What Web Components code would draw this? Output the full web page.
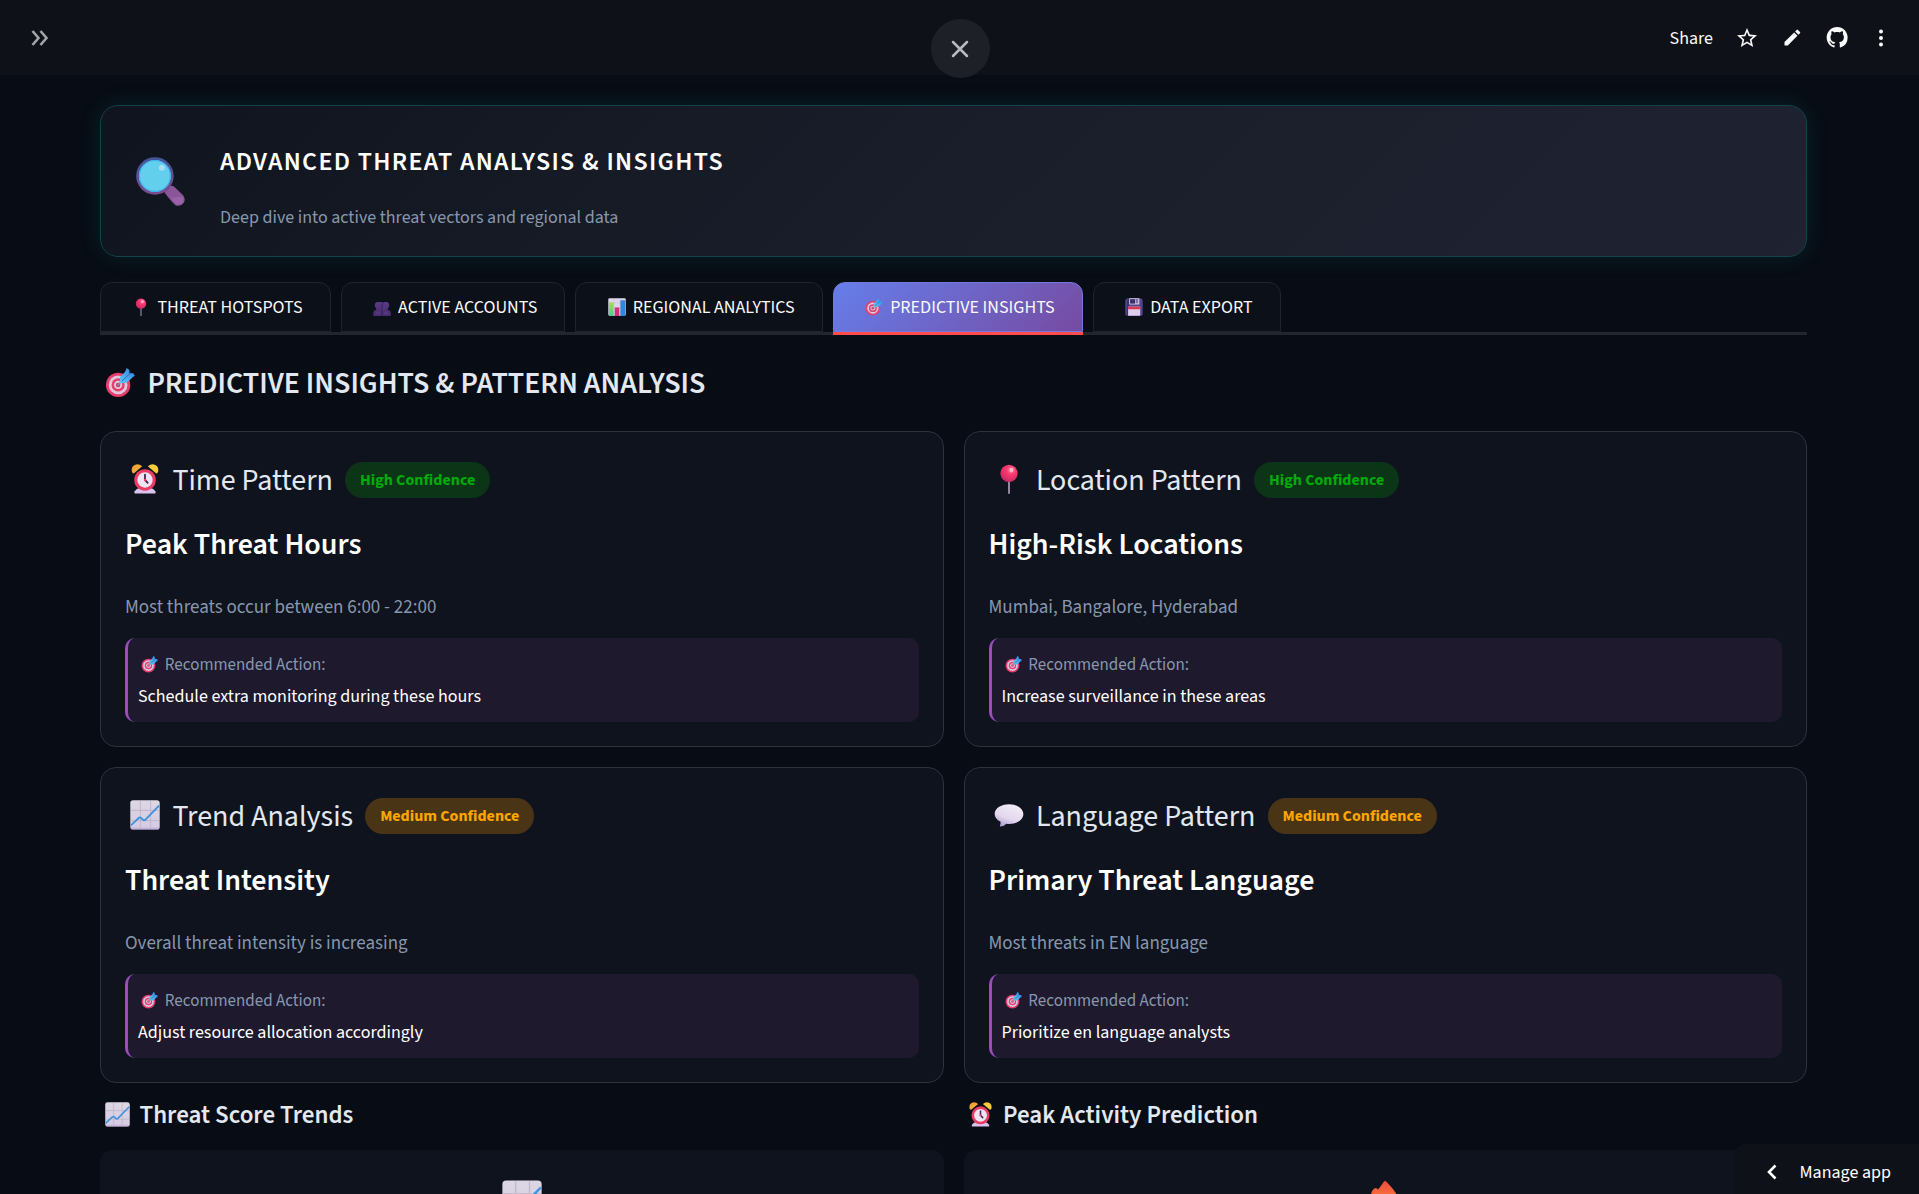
<!DOCTYPE html>
<html lang="en">
<head>
<meta charset="utf-8">
<meta name="viewport" content="width=device-width, initial-scale=1">
<title>Advanced Threat Analysis &amp; Insights</title>
<style>
  :root {
    --page: #080c14;
    --bar: #0e1117;
    --card: #0f131d;
    --text: #e2e8f0;
    --muted: #8797ae;
    --line: #2f323d;
  }
  html, body { height: 100%; margin: 0; }
  body {
    background: var(--page);
    color: var(--text);
    font-family: "Source Sans 3", "Source Sans Pro", "Noto Sans CJK SC", sans-serif;
    font-size: 18px;
  }
</style>
</head>
<body>
<threat-app></threat-app>

<script>
const define = (name, markup, setup) => {
  const template = document.createElement('template');
  template.innerHTML = markup;
  customElements.define(name, class extends HTMLElement {
    connectedCallback() {
      if (this.shadowRoot) return;
      const root = this.attachShadow({ mode: 'open' });
      root.append(template.content.cloneNode(true));
      if (setup) setup(this, root);
    }
  });
};

const GLYPHS = {
  target: `<defs><linearGradient id="d" x1="0" y1="1" x2="1" y2="0"><stop offset="0" stop-color="#5cc8f5"/><stop offset="1" stop-color="#2f7fe0"/></linearGradient></defs>
    <circle cx="14" cy="18" r="13" fill="#e83e6b"/><circle cx="14" cy="18" r="10" fill="#dccbe0"/><circle cx="14" cy="18" r="7" fill="#e83e6b"/><circle cx="14" cy="18" r="4.400" fill="#dccbe0"/><circle cx="14" cy="18" r="2.400" fill="#c93a68"/>
    <path d="M14 18 19 13" stroke="#8d8aa8" stroke-width="1.800" stroke-linecap="round"/><path d="M16 16V9.500L21.500 4 23 0l3 2V5.500h4L31.800 8 29 10.500 23 16z" fill="url(#d)"/><path d="m18 14 9-8.500" stroke="#2567c4" stroke-width="1"/>`,
  pin: `<defs><radialGradient id="p" cx=".62" cy=".3" r=".7"><stop offset="0" stop-color="#ff7f9d"/><stop offset=".4" stop-color="#f9396f"/><stop offset="1" stop-color="#c92a62"/></radialGradient></defs>
    <path d="M16 17v14" stroke="#9c8fa8" stroke-width="2" stroke-linecap="round"/><circle cx="16" cy="10" r="9.200" fill="url(#p)"/><ellipse cx="18.600" cy="6.500" rx="2.200" ry="2.500" fill="#ffb6c8"/>`,
  people: `<defs><linearGradient id="u" x1="0" y1="0" x2="0" y2="1"><stop offset="0" stop-color="#5b3a85"/><stop offset="1" stop-color="#472d6e"/></linearGradient></defs>
    <g fill="url(#u)"><path d="M8.500 7C4.500 7 3 9.500 3.200 13c.2 3 1.300 5 2.800 6v2c-3 .8-5.500 2-5.500 5v6h15.800V7.200z"/><path d="M23.500 7c4 0 5.500 2.500 5.300 6-.2 3-1.300 5-2.800 6v2c3 .8 5.500 2 5.500 5v6H16V9c2-1.600 4-2 7.500-2z"/></g>
    <path d="M15.500 9.500c1.600 4 1 8-1.500 10M16 21v10" fill="none" stroke="#2b1c48" stroke-width="1.400"/><path d="M5 27h8M19 27h8" stroke="#6b4994" stroke-width="1.400"/>`,
  bars: `<defs><linearGradient id="g" x1="0" y1="0" x2="0" y2="1"><stop offset="0" stop-color="#a5dc4c"/><stop offset="1" stop-color="#45ce9a"/></linearGradient></defs>
    <rect x=".5" y=".5" width="31" height="31" rx="2" fill="#e0d6ea"/><path d="M1 9h30M1 17h30M1 25h30M11 1v30M21 1v30" stroke="#c8bbd4" stroke-width="1"/>
    <rect x="2" y="8" width="8" height="24" rx="1" fill="url(#g)"/><rect x="12" y="17" width="8" height="15" rx="1" fill="#d92b78"/><rect x="22" y="4" width="8.500" height="28" rx="1" fill="#2f86db"/>`,
  floppy: `<path d="M3.500.5h25l3 3v25.500l-2.500 2.500H3L.5 29V3.500z" fill="#4f458f"/><path d="M4 1h3v30H3z" fill="#3a3272"/>
    <rect x="7.500" y=".5" width="18" height="11" rx="1" fill="#d9cfe3"/><rect x="9" y="2" width="9" height="8" fill="#393066"/><rect x="19" y="1.500" width="4.500" height="8" fill="#8071a2"/>
    <rect x="5.500" y="15" width="21.500" height="16.500" rx="1" fill="#e0cdea"/><path d="M5.500 16q0-1 1-1H26q1 0 1 1v4H5.500z" fill="#d93a52"/>`,
  alarm: `<defs><linearGradient id="y" x1="0" y1="0" x2="1" y2="1"><stop offset="0" stop-color="#f39a31"/><stop offset="1" stop-color="#f6b93a"/></linearGradient></defs>
    <path d="M6 31.500q-2 0-1-2.500Q7 26 10 25.500h12q3 .5 5 3.500 1 2.500-1 2.500z" fill="#d8c3ee"/>
    <path d="M2 8Q1 3 5 1q4-2 8 1.500L4 10Q2.500 10 2 8z" fill="url(#y)"/><path d="M30 8q1-5-3-7-4-2-8 1.500l9 7.500q1.500 0 2-2z" fill="#f9cb3c"/>
    <circle cx="16" cy="17" r="11.500" fill="#e93b63"/><circle cx="16" cy="17" r="8.200" fill="#efe4f4"/><path d="M16 11.500V17l2.800 3" fill="none" stroke="#4a2b57" stroke-width="2" stroke-linecap="round"/><circle cx="16" cy="17" r="1.300" fill="#e93b63"/>`,
  trend: `<defs><linearGradient id="t" x1="0" y1="0" x2="0" y2="1"><stop offset="0" stop-color="#ddd7e2"/><stop offset=".9" stop-color="#d6cbe4"/><stop offset="1" stop-color="#b79fcf"/></linearGradient></defs>
    <rect x=".3" y=".3" width="31.400" height="31.400" rx="3" fill="url(#t)"/><path d="M11 1v30M22 1v30M1 11h30M1 22h30" stroke="#bfb5c8" stroke-width="1"/>
    <path d="m1 27 8.500-8q1.500-1 2.500.5l2.500 2q1 .5 2-.5L31 6" fill="none" stroke="#3f93dc" stroke-width="2"/>`,
  speech: `<defs><linearGradient id="s" x1=".7" y1="0" x2=".2" y2="1"><stop offset="0" stop-color="#f2ecf7"/><stop offset=".6" stop-color="#e2d8ee"/><stop offset="1" stop-color="#aa97cf"/></linearGradient></defs>
    <path d="M16 4.500c8.800 0 15.300 4.500 15.300 10.500S25 25.500 16 25.500q-1.500 0-3-.2-2 2.700-6 3-1 0-.7-.8.900-1.800.7-4.300Q.7 20.200.7 15C.7 9 7.200 4.500 16 4.500z" fill="url(#s)"/>`,
  magnifier: `<defs><linearGradient id="m" x1="0" y1="0" x2="0" y2="1"><stop offset="0" stop-color="#41569b"/><stop offset="1" stop-color="#7c4b8c"/></linearGradient></defs>
    <path d="m18.300 21.800q2.400-.7 3.500-3.300 1.700-.5 3 .8l5.200 5q2 2.500.6 5-2 2.800-5.300 1.600-1-.4-5.600-6.200-1.800-2-1.400-2.900z" fill="#8a5599"/><path d="m22 26 3.800 4.200q2.700.9 4.300-1.200.8-1.800-.4-3.500z" fill="#9b62a8"/><circle cx="12.100" cy="12.100" r="12" fill="url(#m)"/><circle cx="12.100" cy="12.100" r="10.200" fill="#62cfec"/><circle cx="12.100" cy="12.100" r="9.900" fill="none" stroke="#3fb3ef" stroke-width=".7"/><circle cx="16.600" cy="6.800" r="1.900" fill="#a9dcf4"/>`,
  flame: `<defs><linearGradient id="f" x1="0" y1="0" x2="0" y2="1"><stop offset="0" stop-color="#ee4a3e"/><stop offset=".5" stop-color="#f97a3c"/><stop offset="1" stop-color="#fbb03b"/></linearGradient></defs>
    <path d="M16 .5c2 1.500 6.500 6 9 10.500 3 4 4 7 3.500 11-.7 6-6 10-12.500 10S4 27.500 3.500 21c-.2-4 1-7 1.500-10 .5-2.500 1.500-4 3-4.500 1-.3 1.800.5 2.500 1C12.500 5.500 14 2 16 .5z" fill="url(#f)"/>`
};

define('emoji-icon', `
  <style>
    :host { display: inline-block; flex: none; width: 1em; height: 1em; }
    svg { display: block; width: 100%; height: 100%; overflow: visible; }
  </style>
  <svg viewBox="0 0 32 32" aria-hidden="true"></svg>`,
  (el, root) => { root.querySelector('svg').innerHTML = GLYPHS[el.getAttribute('name')] || ''; });

/* A glyph followed by a label on one line. */
define('icon-label', `
  <style>
    :host { display: inline-flex; align-items: center; white-space: nowrap; }
    emoji-icon { margin: 0 .4em .08em .18em; }
  </style>
  <emoji-icon></emoji-icon><span><slot></slot></span>`,
  (el, root) => {
    const icon = document.createElement('emoji-icon');
    icon.setAttribute('name', el.getAttribute('icon'));
    root.querySelector('emoji-icon').replaceWith(icon);
  });

define('top-bar', `
  <style>
    :host { display: flex; align-items: center; justify-content: space-between; flex: none;
      box-sizing: border-box; height: 75px; padding: 0 26px; background: var(--bar); }
    button, a { display: grid; place-items: center; margin: 0; padding: 0; border: 0; background: none;
      color: #fafafa; font: inherit; text-decoration: none; cursor: pointer; }
    .expand { width: 26px; height: 26px; color: #a3a5aa; }
    nav { display: flex; align-items: center; gap: 21px; }
    nav .icon { width: 24px; height: 24px; }
    nav .share { padding-top: 2px; line-height: 24px; }
    svg { display: block; }
  </style>
  <button class="expand" aria-label="Expand sidebar"><svg width="26" height="26" viewBox="0 0 26 26" fill="none" stroke="currentColor" stroke-width="2.600"><path d="m6.500 6 6 7-6 7M14.500 6l6 7-6 7"/></svg></button>
  <nav>
    <button class="share">Share</button>
    <button class="icon" aria-label="Favorite"><svg width="24" height="24" viewBox="-1 0 24 24" fill="currentColor"><path d="m22 9.240-7.190-.62L12 2 9.190 8.630 2 9.240l5.460 4.730L5.820 21 12 17.270 18.180 21l-1.630-7.030L22 9.240zM12 15.400l-3.760 2.270 1-4.280-3.320-2.880 4.380-.38L12 6.100l1.710 4.040 4.380.38-3.320 2.880 1 4.280L12 15.400z"/></svg></button>
    <button class="icon" aria-label="Edit"><svg width="21" height="21" viewBox="-1 0 24 24" fill="currentColor"><path d="M3 17.250V21h3.750L17.810 9.940l-3.750-3.750L3 17.250zM20.710 7.040a1 1 0 0 0 0-1.410l-2.340-2.340a1 1 0 0 0-1.410 0l-1.830 1.830 3.750 3.750 1.830-1.830z"/></svg></button>
    <a class="icon" href="#" aria-label="GitHub"><svg width="21" height="21" viewBox="-.5 0 16 16" overflow="visible" fill="currentColor"><path d="M8 0C3.580 0 0 3.580 0 8c0 3.540 2.290 6.530 5.470 7.590.4.070.55-.17.55-.38 0-.19-.01-.82-.01-1.490-2.010.37-2.530-.49-2.690-.94-.09-.23-.48-.94-.82-1.130-.28-.15-.68-.52-.01-.53.63-.01 1.080.58 1.230.82.72 1.210 1.870.87 2.330.66.07-.52.28-.87.51-1.070-1.780-.2-3.640-.89-3.640-3.950 0-.87.31-1.590.82-2.150-.08-.2-.36-1.020.08-2.120 0 0 .67-.21 2.200.82.64-.18 1.320-.27 2-.27s1.360.09 2 .27c1.530-1.040 2.200-.82 2.200-.82.44 1.100.16 1.920.08 2.120.51.56.82 1.270.82 2.150 0 3.070-1.870 3.750-3.650 3.950.29.25.54.73.54 1.480 0 1.070-.01 1.930-.01 2.200 0 .21.15.46.55.38A8.010 8.010 0 0 0 16 8c0-4.420-3.580-8-8-8z"/></svg></a>
    <button class="icon" aria-label="Main menu"><svg width="24" height="24" viewBox="0 0 24 24" fill="currentColor"><circle cx="12" cy="5.500" r="2"/><circle cx="12" cy="12" r="2"/><circle cx="12" cy="18.500" r="2"/></svg></button>
  </nav>`);

define('close-button', `
  <style>
    :host { position: absolute; top: 19px; left: 1px; right: 0; display: flex; justify-content: center; pointer-events: none; }
    button { display: grid; place-items: center; width: 59px; height: 59px; padding: 0; border: 0; border-radius: 50%;
      background: #1d2026; color: #b9babd; pointer-events: auto; cursor: pointer; }
  </style>
  <button aria-label="Close"><svg width="18" height="18" viewBox="0 0 18 18" fill="none" stroke="currentColor" stroke-width="2.500" stroke-linecap="round"><path d="m2 2 14 14M16 2 2 16"/></svg></button>`);

define('hero-banner', `
  <style>
    :host { display: flex; align-items: center; gap: 34px; padding: 24px 35px 23px; border: 1px solid #12424b; border-radius: 18px;
      background: linear-gradient(135deg, #10141e 0%, #1a1e2a 50%, #1f2231 100%);
      box-shadow: 0 0 25px rgba(0, 212, 200, .11); }
    emoji-icon { width: 50px; height: 50px; }
    .copy { display: flex; flex-direction: column; gap: 25px; padding-top: 16px; }
    h1 { margin: 0; color: #fff; font-size: 26px; font-weight: 600; line-height: 32px; letter-spacing: .05em; }
    p { margin: 0; color: var(--muted); font-size: 18px; line-height: 30px; }
  </style>
  <emoji-icon name="magnifier"></emoji-icon>
  <div class="copy">
    <h1><slot name="title"></slot></h1>
    <p><slot></slot></p>
  </div>`);

define('tab-bar', `
  <style>
    :host { display: flex; gap: 10px; border-bottom: 3px solid #23262f; }
  </style>
  <slot></slot>`, el => el.setAttribute('role', 'tablist'));

define('tab-item', `
  <style>
    :host { display: block; }
    button { position: relative; display: flex; align-items: center; box-sizing: border-box; height: 50px; padding: 2px 27px 0 28px;
      border: 1px solid #20242f; border-radius: 12px 12px 0 0; background: #0c1019; color: #fafafa;
      font: inherit; font-size: 18px; line-height: 28px; cursor: pointer; }
    :host([selected]) button { border-color: #7379dd; background: linear-gradient(135deg, #667eea, #764ba2); }
    :host([selected]) button::after { content: ""; position: absolute; left: -1px; right: -1px; bottom: -4px; height: 3px; background: #ff4b4b; }
  </style>
  <button role="tab"><icon-label><slot></slot></icon-label></button>`,
  (el, root) => {
    root.querySelector('button').setAttribute('aria-selected', el.hasAttribute('selected'));
    const label = document.createElement('icon-label');
    label.setAttribute('icon', el.getAttribute('icon'));
    label.append(document.createElement('slot'));
    root.querySelector('icon-label').replaceWith(label);
  });

define('insight-card', `
  <style>
    :host { display: block; padding: 25px 24px 24px; border: 1px solid var(--line); border-radius: 16px; background: var(--card); }
    .head { display: flex; align-items: center; gap: 12px; height: 46px; font-size: 30px; }
    .badge { padding: 0 15px; border-radius: 18px; font-size: 16px; font-weight: 700; line-height: 36px; white-space: nowrap;
      background: #0c3517; color: #00ab0a; }
    :host([level="medium"]) .badge { background: #493516; color: #ffa500; }
    h3 { margin: 24px 0 30px; color: #fff; font-size: 30px; font-weight: 600; line-height: 36px; }
    .detail { margin: 0 0 15px; color: var(--muted); font-size: 19px; line-height: 30px; }
    .action { display: flex; flex-direction: column; align-items: flex-start; gap: 3px; padding: 13px 10px 10px;
      border-left: 3px solid #9b4dbd; border-radius: 10px; background: #1e192d; }
    .action icon-label { color: var(--muted); font-size: 17px; line-height: 28px; }
    .action p { margin: 0; color: #fff; font-size: 18px; line-height: 30px; }
  </style>
  <div class="head"><span class="kind"></span><span class="badge"></span></div>
  <h3><slot name="title"></slot></h3>
  <p class="detail"><slot></slot></p>
  <div class="action">
    <icon-label icon="target">Recommended Action:</icon-label>
    <p><slot name="action"></slot></p>
  </div>`,
  (el, root) => {
    const kind = document.createElement('icon-label');
    kind.setAttribute('icon', el.getAttribute('icon'));
    kind.textContent = el.getAttribute('kind');
    root.querySelector('.kind').replaceWith(kind);
    root.querySelector('.badge').textContent = el.getAttribute('level') === 'medium' ? 'Medium Confidence' : 'High Confidence';
  });

define('chart-panel', `
  <style>
    :host { display: flex; flex-direction: column; gap: 20px; }
    h3 { margin: 0; font-size: 25px; font-weight: 600; line-height: 30px; height: 30px; }
    .panel { display: flex; justify-content: center; min-height: 220px; padding: 30px; border-radius: 12px; background: var(--card); font-size: 40px; }
  </style>
  <h3><slot name="title"></slot></h3>
  <div class="panel"><slot></slot></div>`);

define('manage-app', `
  <style>
    :host { position: absolute; right: 0; bottom: 0; }
    button { display: flex; align-items: center; gap: 23px; height: 50px; padding: 6px 28px 0 32px; border: 0; border-radius: 10px 0 0 0;
      background: var(--bar); color: #fff; font: inherit; font-size: 18px; cursor: pointer; }
  </style>
  <button><svg width="10" height="16" viewBox="0 0 10 16" fill="none" stroke="currentColor" stroke-width="2.600"><path d="m8.500 1.500-6.500 6.500 6.500 6.500"/></svg>Manage app</button>`);

define('threat-app', `
  <style>
    :host { position: relative; display: flex; flex-direction: column; height: 100vh; overflow: hidden; }
    main { flex: 1; min-height: 0; overflow-y: auto; scrollbar-width: none; padding: 30px 112px 40px 100px; }
    tab-bar { margin-top: 25px; }
    h2 { margin: 31px 0 29px; height: 36px; font-size: 30px; font-weight: 600; line-height: 36px; }
    .grid { display: grid; grid-template-columns: 1fr 1fr; gap: 20px; }
    .charts { margin-top: 17px; }
  </style>
  <top-bar></top-bar>
  <main>
    <hero-banner><span slot="title">ADVANCED THREAT ANALYSIS &amp; INSIGHTS</span>Deep dive into active threat vectors and regional data</hero-banner>
    <tab-bar>
      <tab-item icon="pin">THREAT HOTSPOTS</tab-item>
      <tab-item icon="people">ACTIVE ACCOUNTS</tab-item>
      <tab-item icon="bars">REGIONAL ANALYTICS</tab-item>
      <tab-item icon="target" selected>PREDICTIVE INSIGHTS</tab-item>
      <tab-item icon="floppy">DATA EXPORT</tab-item>
    </tab-bar>
    <h2><icon-label icon="target">PREDICTIVE INSIGHTS &amp; PATTERN ANALYSIS</icon-label></h2>
    <section class="grid">
      <insight-card icon="alarm" kind="Time Pattern" level="high"><span slot="title">Peak Threat Hours</span>Most threats occur between 6:00 - 22:00<span slot="action">Schedule extra monitoring during these hours</span></insight-card>
      <insight-card icon="pin" kind="Location Pattern" level="high"><span slot="title">High-Risk Locations</span>Mumbai, Bangalore, Hyderabad<span slot="action">Increase surveillance in these areas</span></insight-card>
      <insight-card icon="trend" kind="Trend Analysis" level="medium"><span slot="title">Threat Intensity</span>Overall threat intensity is increasing<span slot="action">Adjust resource allocation accordingly</span></insight-card>
      <insight-card icon="speech" kind="Language Pattern" level="medium"><span slot="title">Primary Threat Language</span>Most threats in EN language<span slot="action">Prioritize en language analysts</span></insight-card>
    </section>
    <section class="grid charts">
      <chart-panel><icon-label slot="title" icon="trend">Threat Score Trends</icon-label><emoji-icon name="trend"></emoji-icon></chart-panel>
      <chart-panel><icon-label slot="title" icon="alarm">Peak Activity Prediction</icon-label><emoji-icon name="flame"></emoji-icon></chart-panel>
    </section>
  </main>
  <close-button></close-button>
  <manage-app></manage-app>`);
</script>
</body>
</html>
